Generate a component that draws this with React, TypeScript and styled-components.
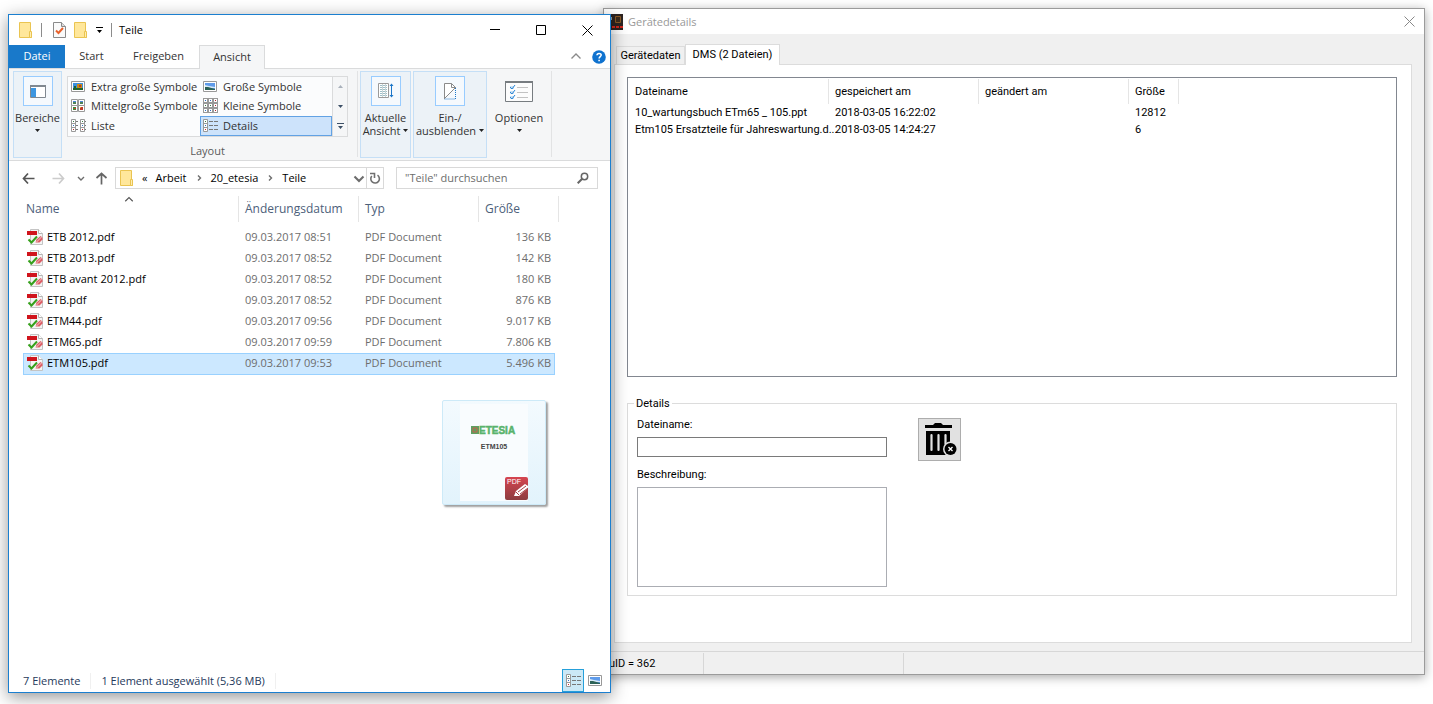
import React from "react";
import styled, { createGlobalStyle, css } from "styled-components";

const GlobalStyle = createGlobalStyle`
  * { box-sizing: border-box; }
  body { margin: 0; background: #fff; overflow: hidden; }
  button, input, textarea { font: inherit; color: inherit; }
  button { background: none; border: 0; padding: 0; margin: 0; }
  svg { display: block; flex: none; }
`;

const Desktop = styled.main`
  position: relative;
  height: 100vh;
  min-height: 640px;
  overflow: hidden;
`;

/* ---------- Explorer window ---------- */

const Explorer = styled.section`
  position: absolute;
  top: 14px;
  left: 8px;
  bottom: 11px;
  width: max(603px, 42vw);
  display: flex;
  flex-direction: column;
  background: #fff;
  border: 1px solid #1b7fcf;
  box-shadow: 0 4px 16px rgba(0, 0, 0, 0.42);
  font: 11px/16px "Open Sans", "Noto Sans", sans-serif;
  color: #000;
`;

const TitleBar = styled.header`
  display: flex;
  align-items: center;
  height: 30px;
  padding-left: 10px;
`;

const Bar = styled.i`
  width: 1px;
  height: 14px;
  margin-right: 3px;
  background: #8c8c8c;
`;

const QuickTools = styled.div`
  display: flex;
  align-items: center;
  gap: 8px;
  margin-right: 4px;
`;

const WindowTitle = styled.h1`
  flex: 1;
  margin: 0;
  font-size: 11px;
  font-weight: 400;
`;

const CaptionButton = styled.button`
  display: grid;
  place-items: center;
  width: 46px;
  height: 28px;
`;

const TabRow = styled.nav`
  display: flex;
  height: 24px;
  border-bottom: 1px solid #dadbdc;
`;

const Tab = styled.button<{ $kind?: "file" | "active"; $width: number }>`
  width: ${(p) => p.$width}px;
  height: 23px;
  padding-bottom: 1px;
  color: #333;
  ${(p) => p.$kind === "file" && css`background: #1979ca; color: #fff;`}
  ${(p) =>
    p.$kind === "active" &&
    css`
      height: 24px;
      padding-bottom: 2px;
      background: #f5f6f7;
      border: 1px solid #dadbdc;
      border-bottom: 0;
    `}
`;

const TabEnd = styled.div`
  display: flex;
  align-items: center;
  gap: 10px;
  margin-left: auto;
  padding-right: 4px;
`;

const Ribbon = styled.div`
  display: flex;
  height: 92px;
  padding: 2px 4px 3px;
  background: #f5f6f7;
  border-bottom: 1px solid #dadbdc;
  color: #333;
`;

const RibbonButton = styled.button<{ $width: number; $lit?: boolean }>`
  display: flex;
  flex-direction: column;
  align-items: center;
  width: ${(p) => p.$width}px;
  height: 87px;
  padding-top: 4px;
  border: 1px solid ${(p) => (p.$lit ? "#c5dff6" : "transparent")};
  background: ${(p) => (p.$lit ? "#ecf2f7" : "transparent")};
  line-height: 13px;
  white-space: nowrap;
`;

const RibbonIcon = styled.span<{ $lit?: boolean }>`
  display: grid;
  place-items: center;
  width: 30px;
  height: 30px;
  margin-bottom: 5px;
  border: 1px solid ${(p) => (p.$lit ? "#98ccff" : "transparent")};
  background: ${(p) => (p.$lit ? "#f5f9fd" : "transparent")};
`;

const Line = styled.span`
  display: flex;
  align-items: center;
  gap: 3px;
  min-height: 13px;
`;

const Divider = styled.i`
  width: 1px;
  height: 86px;
  background: #e2e3e4;
`;

const RibbonGroup = styled.div`
  display: flex;
  gap: 2px;
  margin-left: 9px;
`;

const LayoutGroup = styled.div`
  display: flex;
  flex-direction: column;
  align-items: center;
  gap: 6px;
  width: 281px;
  margin-left: 5px;
  padding-top: 5px;
  color: #5a5a5a;
`;

const Gallery = styled.div`
  display: grid;
  grid-template-columns: 132px 1fr 15px;
  width: 100%;
  height: 61px;
  border: 1px solid #dadbdc;
  background: #fbfcfd;
  color: #333;
`;

const GalleryColumn = styled.div`
  display: grid;
  grid-template-rows: 19px 20px 20px;
`;

const GalleryItem = styled.button<{ $on?: boolean }>`
  display: flex;
  align-items: center;
  gap: 5px;
  padding-left: 2px;
  border: 1px solid ${(p) => (p.$on ? "#62a2e4" : "transparent")};
  background: ${(p) => (p.$on ? "#cde3fb" : "transparent")};
  white-space: nowrap;
`;

const GalleryScroll = styled(GalleryColumn)`
  border-left: 1px solid #dadbdc;
  background: #f5f6f7;
  button { display: grid; place-items: center; }
`;

const NavRow = styled.div`
  display: flex;
  align-items: center;
  height: 34px;
  padding: 0 12px 0 5px;
`;

const NavButtons = styled.div`
  display: grid;
  grid-template-columns: 28px 32px 14px 26px;
  justify-items: center;
  align-items: center;
  margin-right: 1px;
`;

const Address = styled.div`
  display: flex;
  align-items: center;
  gap: 8px;
  flex: 1;
  height: 22px;
  padding-left: 4px;
  border: 1px solid #d9d9d9;
`;

const AddressEnd = styled.div`
  display: grid;
  grid-template-columns: 15px 17px;
  align-items: center;
  justify-items: center;
  align-self: stretch;
  margin-left: auto;
  button { display: grid; place-items: center; align-self: stretch; width: 100%; }
  button + button { border-left: 1px solid #d9d9d9; }
`;

const SearchBox = styled.label`
  display: flex;
  align-items: center;
  width: 202px;
  height: 22px;
  margin-left: 12px;
  padding: 0 8px;
  border: 1px solid #d9d9d9;
  input {
    flex: 1;
    min-width: 0;
    padding: 0;
    border: 0;
    outline: 0;
    background: none;
  }
  input::placeholder { color: #6d6d6d; opacity: 1; }
`;

const FileArea = styled.div`
  position: relative;
  flex: 1;
  padding-left: 14px;
`;

const FileTable = styled.table`
  width: 536px;
  table-layout: fixed;
  border-collapse: separate;
  border-spacing: 0;
  color: #6d6d6d;
`;

const HeadCell = styled.th`
  height: 32px;
  padding: 0;
  vertical-align: top;
  font-size: 12px;
  font-weight: 400;
  text-align: left;
  color: #4c607a;
`;

const HeadLabel = styled.div<{ $first?: boolean }>`
  height: 26px;
  margin-top: 1px;
  padding: 5px 6px 0 ${(p) => (p.$first ? 3 : 6)}px;
  border-right: 1px solid #e5e5e5;
`;

const SortMark = styled.span`
  position: absolute;
  left: 115px;
  top: 0;
`;

const Row = styled.tr<{ $on?: boolean }>`
  td {
    height: ${(p) => (p.$on ? 22 : 21)}px;
    padding: 0 6px 2px;
    line-height: 18px;
    white-space: nowrap;
    border: 0 solid ${(p) => (p.$on ? "#99d1ff" : "transparent")};
    border-top-width: 1px;
    border-bottom-width: ${(p) => (p.$on ? 1 : 0)}px;
    background: ${(p) => (p.$on ? "#cce8ff" : "transparent")};
  }
  td:first-child { padding-left: 3px; border-left-width: 1px; }
  td:last-child { padding-right: 3px; padding-left: 0; border-right-width: 1px; text-align: right; }
`;

const FileName = styled.span`
  display: flex;
  align-items: center;
  gap: 4px;
  color: #000;
`;

const DragPreview = styled.figure`
  position: absolute;
  left: 433px;
  top: 205px;
  display: flex;
  justify-content: center;
  width: 104px;
  height: 105px;
  margin: 0;
  padding: 3px 0;
  border: 1px solid #cdeaf8;
  border-radius: 2px;
  background: linear-gradient(#f3fafe, #e2f3fc);
  box-shadow: 2px 2px 2px rgba(0, 0, 0, 0.38);
`;

const ExplorerStatus = styled.footer`
  display: flex;
  align-items: center;
  height: 23px;
  padding-left: 14px;
  color: #1e395b;
`;

const StatusText = styled.span`
  padding-right: 10px;
  margin-right: 10px;
  border-right: 1px solid #f0f0f0;
`;

const ViewButtons = styled.div`
  display: flex;
  align-self: stretch;
  margin-left: auto;
  padding-right: 4px;
`;

const ViewButton = styled.button<{ $on?: boolean }>`
  display: grid;
  place-items: center;
  width: 22px;
  border: 1px solid ${(p) => (p.$on ? "#26a0da" : "transparent")};
  background: ${(p) => (p.$on ? "#cbe8f6" : "transparent")};
`;

/* ---------- Device dialog ---------- */

const Dialog = styled.section`
  position: absolute;
  top: 8px;
  left: max(603px, 42vw);
  right: 8px;
  bottom: 29px;
  display: flex;
  flex-direction: column;
  background: #f0f0f0;
  border: 1px solid #9b9b9b;
  box-shadow: 0 2px 10px rgba(0, 0, 0, 0.35);
  font: 11px/15px Roboto, "Liberation Sans", sans-serif;
  color: #000;
`;

const DialogTitle = styled.header`
  display: flex;
  align-items: center;
  gap: 5px;
  height: 25px;
  padding-left: 4px;
  background: #fff;
  color: #999;
  h2 {
    flex: 1;
    margin: 0;
    font: 11px/16px "Open Sans", "Noto Sans", sans-serif;
  }
  button { display: grid; place-items: center; width: 29px; height: 25px; }
`;

const DialogTabs = styled.nav`
  display: flex;
  align-items: flex-end;
  height: 30px;
  padding: 0 12px;
`;

const DialogTab = styled.button<{ $on?: boolean }>`
  height: ${(p) => (p.$on ? 21 : 18)}px;
  width: ${(p) => (p.$on ? 95 : 69)}px;
  margin-bottom: ${(p) => (p.$on ? -1 : 0)}px;
  padding: 0;
  border: 1px solid #dcdcdc;
  border-bottom: 0;
  background: ${(p) => (p.$on ? "#fff" : "#f0f0f0")};
  white-space: nowrap;
  ${(p) => p.$on && css`z-index: 1; padding-bottom: 2px;`}
`;

const TabPanel = styled.div`
  flex: 1;
  display: flex;
  flex-direction: column;
  margin: 0 12px 0 10px;
  padding: 12px 14px 12px 12px;
  border: 1px solid #dcdcdc;
  background: #fff;
`;

const DocumentList = styled.div`
  height: 300px;
  padding: 1px;
  border: 1px solid #828790;
`;

const DocumentTable = styled.table`
  width: 550px;
  table-layout: fixed;
  border-collapse: separate;
  border-spacing: 0;
  th {
    height: 25px;
    padding: 0 6px;
    font-weight: 400;
    text-align: left;
    border-right: 1px solid #e5e5e5;
  }
  td {
    height: 17px;
    padding: 0 0 0 6px;
    white-space: nowrap;
  }
`;

const DetailsGroup = styled.fieldset`
  display: flex;
  gap: 31px;
  height: 200px;
  margin: 19px 0 0;
  padding: 7px 9px 8px;
  border: 1px solid #dcdcdc;
  min-width: 0;
  legend { margin-left: -3px; padding: 0 2px; }
`;

const Fields = styled.div`
  display: flex;
  flex-direction: column;
  width: 250px;
  label { height: 19px; line-height: 13px; }
  input { height: 20px; margin-bottom: 11px; padding: 0 3px; border: 1px solid #7a7a7a; outline: 0; }
  textarea { height: 100px; border: 1px solid #abadb3; resize: none; outline: 0; }
`;

const DeleteButton = styled.button`
  display: grid;
  place-items: center;
  width: 43px;
  height: 43px;
  border: 1px solid #adadad;
  background: #e1e1e1;
`;

const DialogStatus = styled.footer`
  display: flex;
  height: 23px;
  margin-top: 8px;
  border-top: 1px solid #d7d7d7;
  span {
    width: 200px;
    margin-top: 1px;
    padding: 3px 0 0 5px;
    border-right: 1px solid #d7d7d7;
  }
  span:first-child { width: 100px; }
`;

/* ---------- Icons ---------- */

const FolderIcon = () => (
  <svg width="14" height="18" viewBox="0 0 14 18">
    <path d="M.5 1.500h11v10l1 1v4H.5z" fill="#ffe79b" stroke="#eac451" />
    <path d="M10.500 16.500v-6h2v6z" fill="#ffedb0" stroke="#eac451" />
  </svg>
);

const CheckDocIcon = () => (
  <svg width="13" height="16" viewBox="0 0 13 16">
    <path d="M.5.500h8l4 4v11H.5z" fill="#fafafa" stroke="#8a8a8a" />
    <path d="M8.500.500v4h4" fill="#ddd" stroke="#8a8a8a" />
    <path d="M3 8.500l2.500 2.500L10 6" fill="none" stroke="#e8622c" strokeWidth="2" />
  </svg>
);

const MenuCaret = ({ color = "#222" }: { color?: string }) => (
  <svg width="5" height="3" viewBox="0 0 5 3">
    <path d="M0 0h5L2.500 3z" fill={color} />
  </svg>
);

const CustomizeIcon = ({ color = "#222" }: { color?: string }) => (
  <svg width="7" height="7" viewBox="0 0 7 7">
    <path d="M0 0h7v1H0zM1 3h5L3.500 6z" fill={color} />
  </svg>
);

const PanesIcon = () => (
  <svg width="16" height="13" viewBox="0 0 16 13">
    <path d="M.5.500h15v12H.500z" fill="#fff" stroke="#808890" />
    <path d="M0 0h16v2H0z" fill="#808890" />
    <path d="M1 3h5v9H1z" fill="#3d96e0" />
  </svg>
);

const SortIcon = () => (
  <svg width="16" height="16" viewBox="0 0 16 16">
    <path d="M.5.500h10v14H.500z" fill="#fff" stroke="#9a9a9a" />
    <path d="M2 2.500h7M2 4.500h7M2 6.500h7M2 8.500h7M2 10.500h7M2 12.500h7" stroke="#9dbfc8" />
    <path d="M4.500 1v13M7.500 1v13" stroke="#c9d5d8" />
    <path d="M13.500 1v13" stroke="#1c76c8" />
    <path d="M11.500 3l2-2.500 2 2.500zM11.500 12l2 2.500 2-2.500z" fill="#1c76c8" />
  </svg>
);

const HideIcon = () => (
  <svg width="14" height="17" viewBox="0 0 14 17">
    <path d="M1.500 15.500V.500h7l4 4z" fill="#fff" stroke="#8a8a8a" />
    <path d="M8.500.500v4h4" fill="none" stroke="#8a8a8a" />
    <path d="M12.500 5v11H1" fill="none" stroke="#1c76c8" strokeDasharray="1 1" />
    <path d="M1 16L12.500 4.500" stroke="#8a8a8a" />
  </svg>
);

const OptionsIcon = () => (
  <svg width="28" height="21" viewBox="0 0 28 21">
    <path d="M.5.500h27v20H.500z" fill="#fcfcfc" stroke="#777c80" />
    <path d="M0 0h28v2H0z" fill="#777c80" />
    <path d="M5 5h4v3H5zM5 10h4v3H5zM5 15h4v3H5z" fill="#c8e0f4" />
    <path d="M5 6l2 2 3-4M5 11l2 2 3-4M5 16l2 2 3-4" fill="none" stroke="#2a86d6" />
    <path d="M12 6.500h11M12 11.500h11M12 16.500h11" stroke="#c2c2c2" />
  </svg>
);

const PictureIcon = ({ vivid }: { vivid?: boolean }) => (
  <svg width="15" height="14" viewBox="0 0 15 14">
    <path d="M.5 1.500h13v10H.500z" fill="#fff" stroke="#999" />
    <path d="M2 3h10v7H2z" fill={vivid ? "#3a8fe0" : "#5f9bea"} />
    {vivid ? (
      <>
        <path d="M6 4h5v5H6z" fill="#c98a12" />
        <path d="M2 8h10v2H2zM3 6h2v2H3z" fill="#21622c" />
        <path d="M8 5h2v2H8z" fill="#b3352a" />
      </>
    ) : (
      <>
        <path d="M2 5l4 1 6 1v1H2z" fill="#d8eaf8" />
        <path d="M2 7l3 0 7 2v1H2z" fill="#2c6257" />
      </>
    )}
  </svg>
);

const MediumIcon = () => (
  <svg width="15" height="14" viewBox="0 0 15 14">
    <path d="M.5.500h6v6h-6zM7.500.500h6v6h-6zM.5 6.500h6v6h-6zM7.500 6.500h6v6h-6z" fill="#fff" stroke="#999" />
    <path d="M2 2h3v1H2zM9 2h3v1H9z" fill="#4e87d8" />
    <path d="M2 3h3v2H2zM9 3h3v2H9z" fill="#4d8257" />
    <path d="M2 8h3v3H2z" fill="#3f8a35" />
    <path d="M3 9h2v1H3z" fill="#d0342c" />
    <path d="M9 8h3v3H9z" fill="#c0392b" />
    <path d="M9 8h1v1H9z" fill="#e0a92a" />
  </svg>
);

const SmallIcon = () => (
  <svg width="15" height="16" viewBox="0 0 15 16">
    {[0, 5, 10].map((y) =>
      [0, 5, 10].map((x) => (
        <g key={`${x}-${y}`}>
          <rect x={x + 0.5} y={y + 0.5} width="4" height="4" fill="#fff" stroke="#999" />
          <rect x={x + 2} y={y + 2} width="1" height="1" fill={x === 10 ? "#b8262b" : y === 5 ? "#3c7d46" : "#2f6fc4"} />
        </g>
      )),
    )}
  </svg>
);

const ListIcon = () => (
  <svg width="15" height="14" viewBox="0 0 15 14">
    {[0, 9].map((x) => (
      <g key={x}>
        <path d={`M${x + 0.5} .5h4v12h-4zM${x} 4.500h5M${x} 8.500h5`} fill="#fff" stroke="#999" />
        <path d={`M${x + 2} 2h1v1h-1z`} fill="#3c7d46" />
        <path d={`M${x + 2} 6h1v1h-1z`} fill="#2f6fc4" />
        <path d={`M${x + 2} 10h1v1h-1z`} fill="#b8262b" />
        <path d={`M${x + 5} 2.500h2M${x + 5} 6.500h2M${x + 5} 10.500h2`} stroke="#777" />
      </g>
    ))}
  </svg>
);

const DetailsIcon = () => (
  <svg width="15" height="14" viewBox="0 0 15 14">
    <path d="M.5.500h4v12h-4zM0 4.500h5M0 8.500h5" fill="#fff" stroke="#999" />
    <path d="M2 2h1v1H2z" fill="#3c7d46" />
    <path d="M2 6h1v1H2z" fill="#2f6fc4" />
    <path d="M2 10h1v1H2z" fill="#d02a2f" />
    <path d="M6 2.500h4M6 6.500h4M6 10.500h4M11 2.500h4M11 6.500h4M11 10.500h4" stroke="#777" />
  </svg>
);

const ArrowIcon = ({ color, turn = 0 }: { color: string; turn?: number }) => (
  <svg width="13" height="13" viewBox="0 0 13 13">
    <path
      d="M6 1.500L1.500 6.500 6 11.500M1.500 6.500H12.500"
      transform={`rotate(${turn} 6.500 6.500)`}
      fill="none"
      stroke={color}
      strokeWidth="1.700"
    />
  </svg>
);

type ChevronProps = { size?: number; color?: string; dir?: "down" | "up" | "right" };

const Chevron = ({ size = 8, color = "#6d6d6d", dir = "down" }: ChevronProps) => {
  const paths = { down: "M1 3l3 3 3-3", up: "M1 5l3-3 3 3", right: "M3 1.500L5.500 4 3 6.500" };
  return (
    <svg width={size} height={size} viewBox="0 0 8 8">
      <path d={paths[dir]} fill="none" stroke={color} strokeWidth={dir === "up" ? 0.9 : 1.4} />
    </svg>
  );
};

const RefreshIcon = () => (
  <svg width="12" height="13" viewBox="0 0 12 13">
    <path d="M8.500 3.200A4.300 4.300 0 1 1 2.800 4" fill="none" stroke="#707070" strokeWidth="1.600" />
    <path d="M1 1.500H5.500V6" fill="none" stroke="#707070" strokeWidth="1.600" />
  </svg>
);

const SearchIcon = () => (
  <svg width="12" height="12" viewBox="0 0 12 12">
    <circle cx="7.500" cy="4.500" r="3.200" fill="none" stroke="#666" strokeWidth="1.500" />
    <path d="M5.200 6.800L.7 11.300" stroke="#666" strokeWidth="2" />
  </svg>
);

const HelpIcon = () => (
  <svg width="14" height="14" viewBox="0 0 14 14">
    <circle cx="7" cy="7" r="6.800" fill="#0f72cf" />
    <path d="M5 5.300C5 2.800 9.200 2.800 9.200 5.100 9.200 6.700 7.100 6.700 7.100 8.600" fill="none" stroke="#fff" strokeWidth="1.500" />
    <path d="M6.300 9.700h1.600v1.500H6.300z" fill="#fff" />
  </svg>
);

const PdfFileIcon = () => (
  <svg width="16" height="16" viewBox="0 0 16 16">
    <path d="M3.500.500h8l4 4v11h-12z" fill="#f4f4f4" stroke="#c4c4c4" />
    <path d="M11.500.500v4h4" fill="#fff" stroke="#b5b5b5" />
    <path d="M0 2h10v4H0z" fill="#d0141c" />
    <path d="M8.500 13.500l1-3 4-3.500 2 1.500v2l-3 3z" fill="#dd5f66" />
    <path d="M9.500 13l5-5" stroke="#f5c9cc" />
    <path d="M1.500 10.500l3 3L10 7.500" fill="none" stroke="#35a01b" strokeWidth="2" />
  </svg>
);

const PdfPreview = () => (
  <svg width="68" height="97" viewBox="0 0 68 97">
    <defs>
      <linearGradient id="badge" x1="0" y1="0" x2="0" y2="1">
        <stop offset="0" stopColor="#d64550" />
        <stop offset="1" stopColor="#8d3d40" />
      </linearGradient>
    </defs>
    <path d="M0 0h68v97H0z" fill="#f9fcfe" />
    <path d="M11 22h8v8h-8z" fill="#5f9f60" />
    <path d="M13 24h4v4h-4z" fill="none" stroke="#c4624d" />
    <text x="19" y="30" fontFamily="Liberation Sans, sans-serif" fontWeight="700" fontSize="10" fill="#59b36c" stroke="#59b36c" strokeWidth="0.500">ETESIA</text>
    <text x="34" y="45" textAnchor="middle" fontFamily="Liberation Sans, sans-serif" fontWeight="700" fontSize="7" fill="#444">ETM105</text>
    <rect x="45" y="73" width="23" height="23" rx="2" fill="url(#badge)" />
    <text x="47" y="80" fontFamily="Liberation Sans, sans-serif" fontSize="7" fill="#fff">PDF</text>
    <path d="M54 92l2-5 9-7 3 2v2l-9 8z" fill="#fff" />
    <path d="M56 88l3 3M58 88l8-6M60 90l8-6" stroke="#a94247" />
  </svg>
);

const AppIcon = () => (
  <svg width="15" height="16" viewBox="0 0 15 16">
    <path d="M0 0h15v16H0z" fill="#2c2320" />
    <path d="M7.500 2.500h5v6h-5z" fill="#3b2a1b" stroke="#8a5a25" />
    <path d="M1 3h3v3H1z" fill="#8d9aa4" />
    <path d="M0 12h15v2H0z" fill="#d3271c" />
    <path d="M3.500 10v5M7.500 10v5M11.500 10v5" stroke="#2c2320" />
  </svg>
);

const CloseIcon = ({ color = "#000" }: { color?: string }) => (
  <svg width="11" height="11" viewBox="0 0 11 11">
    <path d="M.5.500l10 10M10.500.500l-10 10" stroke={color} />
  </svg>
);

const TrashIcon = () => (
  <svg width="35" height="33" viewBox="0 0 35 33">
    <path d="M3 2h8l2-2h6l2 2h9v3H3zM4 8h24v24H4z" fill="#000" />
    <path d="M9.500 12v15M16.500 12v15M23.500 12v9" stroke="#e1e1e1" strokeWidth="2.200" strokeLinecap="round" />
    <circle cx="28.500" cy="26" r="7.500" fill="#e1e1e1" />
    <circle cx="28.500" cy="26" r="6" fill="#000" />
    <path d="M26.500 24l4 4M30.500 24l-4 4" stroke="#fff" strokeWidth="1.300" />
  </svg>
);

/* ---------- Data ---------- */

const files = [
  { name: "ETB 2012.pdf", date: "09.03.2017 08:51", size: "136 KB" },
  { name: "ETB 2013.pdf", date: "09.03.2017 08:52", size: "142 KB" },
  { name: "ETB avant 2012.pdf", date: "09.03.2017 08:52", size: "180 KB" },
  { name: "ETB.pdf", date: "09.03.2017 08:52", size: "876 KB" },
  { name: "ETM44.pdf", date: "09.03.2017 09:56", size: "9.017 KB" },
  { name: "ETM65.pdf", date: "09.03.2017 09:59", size: "7.806 KB" },
  { name: "ETM105.pdf", date: "09.03.2017 09:53", size: "5.496 KB", selected: true },
];

const documents = [
  { name: "10_wartungsbuch ETm65 _ 105.ppt", saved: "2018-03-05 16:22:02", size: "12812" },
  { name: "Etm105 Ersatzteile für Jahreswartung.d...", saved: "2018-03-05 14:24:27", size: "6" },
];

/* ---------- Windows ---------- */

const DeviceDialog = () => (
  <Dialog>
    <DialogTitle>
      <AppIcon />
      <h2>Gerätedetails</h2>
      <button aria-label="Schließen"><CloseIcon color="#888" /></button>
    </DialogTitle>
    <DialogTabs>
      <DialogTab>Gerätedaten</DialogTab>
      <DialogTab $on>DMS (2 Dateien)</DialogTab>
    </DialogTabs>
    <TabPanel>
      <DocumentList>
        <DocumentTable>
          <colgroup>
            <col width="200" /><col width="150" /><col width="150" /><col width="50" />
          </colgroup>
          <thead>
            <tr><th>Dateiname</th><th>gespeichert am</th><th>geändert am</th><th>Größe</th></tr>
          </thead>
          <tbody>
            {documents.map((d) => (
              <tr key={d.name}><td>{d.name}</td><td>{d.saved}</td><td /><td>{d.size}</td></tr>
            ))}
          </tbody>
        </DocumentTable>
      </DocumentList>
      <DetailsGroup>
        <legend>Details</legend>
        <Fields>
          <label htmlFor="doc-name">Dateiname:</label>
          <input id="doc-name" type="text" />
          <label htmlFor="doc-text">Beschreibung:</label>
          <textarea id="doc-text" />
        </Fields>
        <DeleteButton aria-label="Löschen"><TrashIcon /></DeleteButton>
      </DetailsGroup>
    </TabPanel>
    <DialogStatus>
      <span>uID = 362</span>
      <span />
    </DialogStatus>
  </Dialog>
);

const ExplorerWindow = () => (
  <Explorer>
    <TitleBar>
      <QuickTools>
        <FolderIcon />
        <Bar />
        <CheckDocIcon />
        <FolderIcon />
        <CustomizeIcon color="#000" />
        <Bar />
      </QuickTools>
      <WindowTitle>Teile</WindowTitle>
      <CaptionButton aria-label="Minimieren">
        <svg width="10" height="10" viewBox="0 0 10 10"><path d="M0 4.500h10" stroke="#000" /></svg>
      </CaptionButton>
      <CaptionButton aria-label="Maximieren">
        <svg width="10" height="10" viewBox="0 0 10 10"><path d="M.5.500h9v9h-9z" fill="none" stroke="#000" /></svg>
      </CaptionButton>
      <CaptionButton aria-label="Schließen"><CloseIcon /></CaptionButton>
    </TitleBar>
    <TabRow>
      <Tab $kind="file" $width={56}>Datei</Tab>
      <Tab $width={53}>Start</Tab>
      <Tab $width={81}>Freigeben</Tab>
      <Tab $kind="active" $width={66}>Ansicht</Tab>
      <TabEnd>
        <Chevron size={12} color="#8a8a8a" dir="up" />
        <HelpIcon />
      </TabEnd>
    </TabRow>
    <Ribbon>
      <RibbonButton $lit $width={49}>
        <RibbonIcon $lit><PanesIcon /></RibbonIcon>
        <Line>Bereiche</Line>
        <Line><MenuCaret /></Line>
      </RibbonButton>
      <LayoutGroup>
        <Gallery>
          <GalleryColumn>
            <GalleryItem><PictureIcon vivid />Extra große Symbole</GalleryItem>
            <GalleryItem><MediumIcon />Mittelgroße Symbole</GalleryItem>
            <GalleryItem><ListIcon />Liste</GalleryItem>
          </GalleryColumn>
          <GalleryColumn>
            <GalleryItem><PictureIcon />Große Symbole</GalleryItem>
            <GalleryItem><SmallIcon />Kleine Symbole</GalleryItem>
            <GalleryItem $on><DetailsIcon />Details</GalleryItem>
          </GalleryColumn>
          <GalleryScroll>
            <button aria-label="Nach oben">
              <svg width="5" height="3" viewBox="0 0 5 3"><path d="M0 3h5L2.500 0z" fill="#a9b1bb" /></svg>
            </button>
            <button aria-label="Nach unten"><MenuCaret color="#3c4f66" /></button>
            <button aria-label="Alle anzeigen"><CustomizeIcon color="#3c4f66" /></button>
          </GalleryScroll>
        </Gallery>
        <span>Layout</span>
      </LayoutGroup>
      <RibbonGroup>
        <Divider />
        <RibbonButton $lit $width={51}>
          <RibbonIcon $lit><SortIcon /></RibbonIcon>
          <Line>Aktuelle</Line>
          <Line>Ansicht <MenuCaret /></Line>
        </RibbonButton>
        <RibbonButton $lit $width={74}>
          <RibbonIcon $lit><HideIcon /></RibbonIcon>
          <Line>Ein-/</Line>
          <Line>ausblenden <MenuCaret /></Line>
        </RibbonButton>
        <RibbonButton $width={60}>
          <RibbonIcon><OptionsIcon /></RibbonIcon>
          <Line>Optionen</Line>
          <Line><MenuCaret /></Line>
        </RibbonButton>
        <Divider />
      </RibbonGroup>
    </Ribbon>
    <NavRow>
      <NavButtons>
        <button aria-label="Zurück"><ArrowIcon color="#555" /></button>
        <button aria-label="Vorwärts"><ArrowIcon color="#ccc" turn={180} /></button>
        <button aria-label="Verlauf"><Chevron /></button>
        <button aria-label="Aufwärts"><ArrowIcon color="#666" turn={90} /></button>
      </NavButtons>
      <Address>
        <FolderIcon />
        <button>«</button>
        <button>Arbeit</button>
        <Chevron dir="right" />
        <button>20_etesia</button>
        <Chevron dir="right" />
        <button>Teile</button>
        <AddressEnd>
          <button aria-label="Vorherige Orte"><Chevron size={12} /></button>
          <button aria-label="Aktualisieren"><RefreshIcon /></button>
        </AddressEnd>
      </Address>
      <SearchBox>
        <input type="text" aria-label="Suchen" placeholder={'"Teile" durchsuchen'} />
        <SearchIcon />
      </SearchBox>
    </NavRow>
    <FileArea>
      <SortMark><Chevron size={10} color="#555" dir="up" /></SortMark>
      <FileTable>
        <colgroup>
          <col width="216" /><col width="120" /><col width="120" /><col width="76" /><col width="4" />
        </colgroup>
        <thead>
          <tr>
            <HeadCell><HeadLabel $first>Name</HeadLabel></HeadCell>
            <HeadCell><HeadLabel>Änderungsdatum</HeadLabel></HeadCell>
            <HeadCell><HeadLabel>Typ</HeadLabel></HeadCell>
            <HeadCell colSpan={2}><HeadLabel>Größe</HeadLabel></HeadCell>
          </tr>
        </thead>
        <tbody>
          {files.map((f) => (
            <Row key={f.name} $on={f.selected}>
              <td><FileName><PdfFileIcon />{f.name}</FileName></td>
              <td>{f.date}</td>
              <td>PDF Document</td>
              <td>{f.size}</td>
            </Row>
          ))}
        </tbody>
      </FileTable>
      <DragPreview><PdfPreview /></DragPreview>
    </FileArea>
    <ExplorerStatus>
      <StatusText>7 Elemente</StatusText>
      <StatusText>1 Element ausgewählt (5,36 MB)</StatusText>
      <ViewButtons>
        <ViewButton $on aria-label="Details"><DetailsIcon /></ViewButton>
        <ViewButton aria-label="Miniaturansichten"><PictureIcon /></ViewButton>
      </ViewButtons>
    </ExplorerStatus>
  </Explorer>
);

export default function App() {
  return (
    <Desktop>
      <GlobalStyle />
      <DeviceDialog />
      <ExplorerWindow />
    </Desktop>
  );
}
